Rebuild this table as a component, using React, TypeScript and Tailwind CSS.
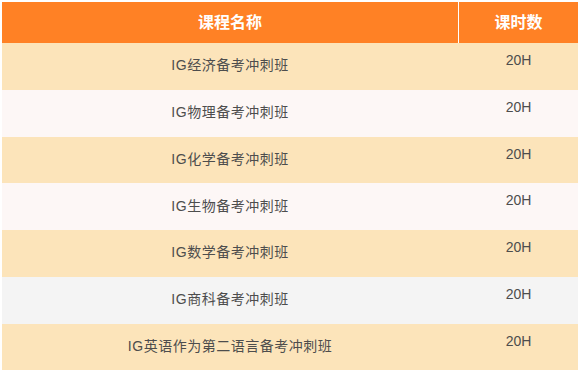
import React from "react";

const rows = [
  { name: "IG经济备考冲刺班", bg: "bg-[#fce4ba]" },
  { name: "IG物理备考冲刺班", bg: "bg-[#fdf7f6]" },
  { name: "IG化学备考冲刺班", bg: "bg-[#fce4ba]" },
  { name: "IG生物备考冲刺班", bg: "bg-[#fdf7f6]" },
  { name: "IG数学备考冲刺班", bg: "bg-[#fce4ba]" },
  { name: "IG商科备考冲刺班", bg: "bg-[#f4f4f4]" },
  { name: "IG英语作为第二语言备考冲刺班", bg: "bg-[#fce4ba]" },
];

export default function App() {
  return (
    <div
      className="w-[581px] h-[376px] bg-white pt-[2px] pl-[2px]"
      style={{ fontFamily: '"Liberation Sans", "Noto Sans CJK SC", sans-serif' }}
    >
      <div className="w-[576px] flex flex-col">
        <div className="flex h-[41px] bg-[#ff8125] text-white text-[16px] font-bold">
          <div className="w-[456px] flex items-center justify-center">课程名称</div>
          <div className="w-[1px] bg-white" />
          <div className="flex-1 flex items-center justify-center">课时数</div>
        </div>
        {rows.map((r) => (
          <div key={r.name} className={`flex h-[46.75px] ${r.bg} text-[#4d4d4d] text-[14px]`}>
            <div className="w-[456px] flex items-center justify-center tracking-[0.5px] leading-[21px] pb-[1px]">
              {r.name}
            </div>
            <div className="w-[1px]" />
            <div className="flex-1 flex justify-center pt-[7px] leading-[21px]">20H</div>
          </div>
        ))}
      </div>
    </div>
  );
}
